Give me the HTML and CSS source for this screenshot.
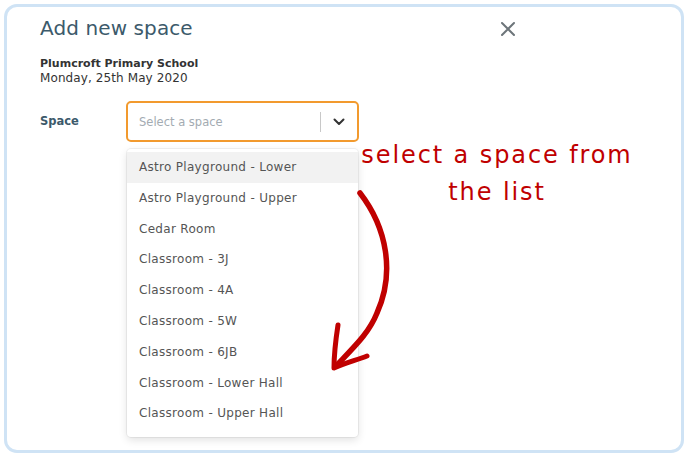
FILE: index.html
```html
<!DOCTYPE html>
<html>
<head>
<meta charset="utf-8">
<link rel="stylesheet" href="styles.css">
</head>
<body>
<div class="frame">
  <div class="dialog">
    <div class="header">
      <h1 class="title">Add new space</h1>
      <svg class="close" width="16" height="16" viewBox="0 0 16 16"><path d="M2 2 L14 14 M14 2 L2 14" stroke="#6d757a" stroke-width="2" stroke-linecap="round"/></svg>
    </div>
    <div class="meta">
      <div class="school">Plumcroft Primary School</div>
      <div class="date">Monday, 25th May 2020</div>
    </div>
    <div class="field">
      <label class="label">Space</label>
      <div class="select-wrap">
        <div class="select">
          <span class="placeholder">Select a space</span>
          <span class="sep"></span>
          <svg class="chev" width="12" height="8" viewBox="0 0 12 8"><path d="M1.5 1.5 L6 6 L10.5 1.5" fill="none" stroke="#333" stroke-width="2" stroke-linecap="round" stroke-linejoin="round"/></svg>
        </div>
        <ul class="menu">
          <li class="item active">Astro Playground - Lower</li>
          <li class="item">Astro Playground - Upper</li>
          <li class="item">Cedar Room</li>
          <li class="item">Classroom - 3J</li>
          <li class="item">Classroom - 4A</li>
          <li class="item">Classroom - 5W</li>
          <li class="item">Classroom - 6JB</li>
          <li class="item">Classroom - Lower Hall</li>
          <li class="item">Classroom - Upper Hall</li>
        </ul>
      </div>
    </div>
  </div>
  <div class="note">select a space from<br>the list</div>
  <svg class="arrow" width="80" height="190" viewBox="0 0 80 190">
    <path d="M35 5 C 62 40, 70 85, 52 125 C 44 145, 30 158, 11 178" fill="none" stroke="#c00000" stroke-width="5.5" stroke-linecap="round"/>
    <path d="M13 137 C 11 150, 9 165, 9 180 C 20 175, 32 172, 42 168" fill="none" stroke="#c00000" stroke-width="5" stroke-linecap="round" stroke-linejoin="round"/>
  </svg>
</div>
</body>
</html>
```
FILE: styles.css
```css
* { box-sizing: border-box; }
html, body { margin: 0; padding: 0; background: #ffffff; }
body { padding: 4px; font-family: "DejaVu Sans", "Noto Sans", sans-serif; }
.frame {
  position: relative;
  width: 680px;
  height: 449px;
  border: 3px solid #cfe3f5;
  border-radius: 13px;
  background: #fff;
  padding: 6px 0 0 33px;
}
.dialog { width: 478px; }
.header { display: flex; justify-content: space-between; align-items: center; height: 29px; }
.title { margin: 0; font-weight: 400; font-size: 20px; color: #3c5a6b; letter-spacing: 0.1px; }
.close { margin-right: 2px; margin-top: 2px; }
.meta { margin-top: 14px; line-height: 15px; color: #333; }
.school { font-weight: 600; font-size: 11px; }
.date { font-size: 12px; letter-spacing: 0.1px; }
.field { display: flex; align-items: flex-start; margin-top: 15px; }
.label { width: 86px; font-size: 11.5px; font-weight: 600; color: #3c5a6b; padding-top: 13px; }
.select-wrap { position: relative; }
.select {
  width: 233px; height: 41px;
  border: 2px solid #f29a2e;
  border-radius: 5px;
  display: flex; align-items: center;
  padding: 0 12px 0 11px;
}
.placeholder { flex: 1; font-size: 11.5px; color: #a3abb2; }
.sep { width: 1px; height: 20px; background: #c8c8c8; margin-right: 12px; }
.chev { display: block; }
.menu {
  position: absolute; left: 1px; top: 48px;
  width: 231px;
  margin: 0; padding: 3px 0 8px;
  list-style: none;
  background: #fff;
  border-radius: 4px;
  box-shadow: 0 0 0 1px rgba(0,0,0,0.05), 0 3px 8px rgba(0,0,0,0.12);
}
.item { height: 30.8px; line-height: 30.8px; padding-left: 12px; font-size: 12px; letter-spacing: 0.3px; color: #555; }
.item.active { background: #f2f2f2; }
.note {
  position: absolute; left: 340px; top: 130px; width: 300px;
  text-align: center; font-size: 24px; line-height: 37px; letter-spacing: 1.9px; color: #c00000;
}
.arrow { position: absolute; left: 318px; top: 181px; }
```
